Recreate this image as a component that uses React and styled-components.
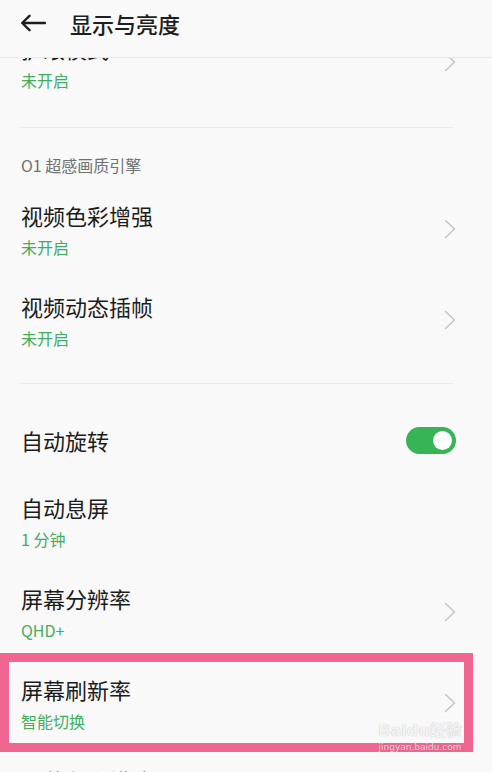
import React from "react";
import styled, { createGlobalStyle } from "styled-components";

const GlobalStyle = createGlobalStyle`
  html, body {
    margin: 0;
    padding: 0;
    background: #f9f9f9;
  }
  body {
    font-family: "Noto Sans CJK SC", "Noto Sans", sans-serif;
    -webkit-font-smoothing: antialiased;
  }
`;

const Page = styled.div`
  width: 492px;
  height: 772px;
  overflow: hidden;
  display: flex;
  flex-direction: column;
  background: #f9f9f9;
`;

const Header = styled.header`
  height: 57px;
  flex: none;
  display: flex;
  align-items: center;
  padding-left: 20px;
  border-bottom: 1px solid #e7e7e7;
  background: #f9f9f9;
  position: relative;
  z-index: 2;
`;

const BackButton = styled.button`
  border: 0;
  background: none;
  padding: 0;
  width: 26px;
  height: 18px;
  display: flex;
  align-items: center;
  margin-top: -11px;
  color: #1e1e1e;
`;

const HeaderTitle = styled.h1`
  margin: -12px 0 0 24px;
  font-size: 22px;
  font-weight: 500;
  color: #1e1e1e;
  line-height: 30px;
`;

const Viewport = styled.div`
  flex: 1;
  overflow: hidden;
`;

const List = styled.div`
  margin-top: -41px;
  display: flex;
  flex-direction: column;
`;

const Row = styled.div`
  position: relative;
  display: flex;
  align-items: center;
  padding: ${(p) => (p.$single ? "18px" : "15px")} 36px
    ${(p) => (p.$single ? "20px" : "16px")} 21px;
`;

const TextBlock = styled.div`
  flex: 1;
  display: flex;
  flex-direction: column;
`;

const Title = styled.div`
  font-size: 22px;
  line-height: 32px;
  color: #1c1c1c;
  white-space: nowrap;
`;

const Subtitle = styled.div`
  margin-top: 4px;
  font-size: 16px;
  line-height: 24px;
  color: #43ad5c;
  white-space: nowrap;
`;

const Divider = styled.div`
  height: 1px;
  background: #ececec;
  margin: ${(p) => p.$top}px 39px ${(p) => p.$bottom}px 20px;
`;

const SectionLabel = styled.div`
  padding: 25px 21px 7px;
  font-size: 16px;
  line-height: 24px;
  color: #707070;
`;

const ChevronIcon = styled.svg`
  width: 12px;
  height: 20px;
  flex: none;
`;

const Switch = styled.div`
  width: 50px;
  height: 27px;
  border-radius: 14px;
  background: ${(p) => (p.$on ? "#37b456" : "#d0d0d0")};
  display: flex;
  align-items: center;
  justify-content: ${(p) => (p.$on ? "flex-end" : "flex-start")};
  padding: 0 4px;
  box-sizing: border-box;
  flex: none;
`;

const Knob = styled.div`
  width: 19px;
  height: 19px;
  border-radius: 50%;
  background: #ffffff;
`;

const Highlight = styled.div`
  position: absolute;
  top: -5px;
  bottom: -3px;
  left: 0;
  width: 473px;
  box-sizing: border-box;
  border: 9px solid #ef6690;
  pointer-events: none;
`;

const Watermark = styled.div`
  position: absolute;
  left: 376px;
  top: 62px;
  width: 88px;
  display: flex;
  flex-direction: column;
  align-items: center;
  pointer-events: none;
`;

const WatermarkMain = styled.div`
  font-family: "DejaVu Sans", "Noto Sans CJK SC", sans-serif;
  font-weight: bold;
  font-size: 16px;
  line-height: 22px;
  color: rgba(255, 255, 255, 0.85);
  text-shadow: 0 0 1px rgba(0, 0, 0, 0.3);
  white-space: nowrap;
`;

const WatermarkSub = styled.div`
  font-family: "DejaVu Sans", sans-serif;
  font-size: 9px;
  line-height: 11px;
  color: rgba(255, 255, 255, 0.8);
  text-shadow: 0 0 1px rgba(0, 0, 0, 0.25);
  white-space: nowrap;
`;

const Chevron = () => (
  <ChevronIcon viewBox="0 0 12 20" fill="none">
    <path
      d="M1.5 1.5 L10.5 10 L1.5 18.5"
      stroke="#c6c6c6"
      strokeWidth="1.6"
      strokeLinecap="round"
      strokeLinejoin="round"
    />
  </ChevronIcon>
);

const BackArrow = () => (
  <svg width="26" height="18" viewBox="0 0 26 18" fill="none">
    <path
      d="M25 9 H2.5 M9.5 1.8 L2.2 9 L9.5 16.2"
      stroke="#1e1e1e"
      strokeWidth="2.4"
      strokeLinecap="round"
      strokeLinejoin="round"
    />
  </svg>
);

const SettingRow = ({ title, sub, highlight, children }) => (
  <Row>
    <TextBlock>
      <Title>{title}</Title>
      <Subtitle>{sub}</Subtitle>
    </TextBlock>
    {children || <Chevron />}
    {highlight && (
      <>
        <Highlight />
        <Watermark>
          <WatermarkMain>Baidu经验</WatermarkMain>
          <WatermarkSub>jingyan.baidu.com</WatermarkSub>
        </Watermark>
      </>
    )}
  </Row>
);

export default function App() {
  return (
    <Page>
      <GlobalStyle />
      <Header>
        <BackButton aria-label="返回">
          <BackArrow />
        </BackButton>
        <HeaderTitle>显示与亮度</HeaderTitle>
      </Header>
      <Viewport>
        <List>
          <SettingRow title="护眼模式" sub="未开启" />
          <Divider $top={19} $bottom={0} />
          <SectionLabel>O1 超感画质引擎</SectionLabel>
          <SettingRow title="视频色彩增强" sub="未开启" />
          <SettingRow title="视频动态插帧" sub="未开启" />
          <Divider $top={17} $bottom={22} />
          <Row $single>
            <TextBlock>
              <Title>自动旋转</Title>
            </TextBlock>
            <Switch $on>
              <Knob />
            </Switch>
          </Row>
          <SettingRow title="自动息屏" sub="1 分钟">
            <span />
          </SettingRow>
          <SettingRow title="屏幕分辨率" sub="QHD+" />
          <SettingRow title="屏幕刷新率" sub="智能切换" highlight />
          <SettingRow title="屏幕色彩模式" sub="生动" />
        </List>
      </Viewport>
    </Page>
  );
}
